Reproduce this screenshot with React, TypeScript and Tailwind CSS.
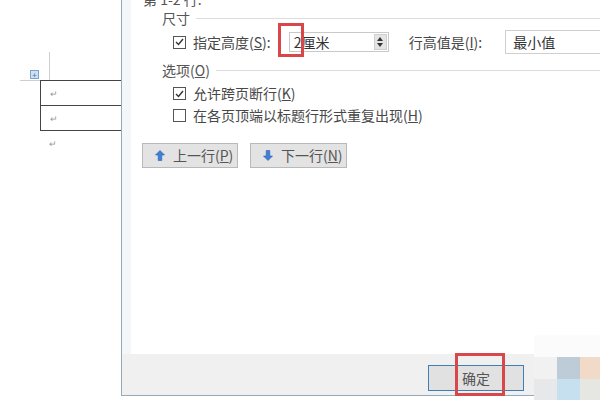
import React from 'react';

const FONT = { fontFamily: '"Noto Sans CJK SC", "Noto Sans", sans-serif' };

const Checkbox: React.FC<{ checked?: boolean }> = ({ checked }) => (
  <div className="w-[13px] h-[13px] border border-[#555] bg-white flex items-center justify-center shrink-0">
    {checked && (
      <svg width="9" height="8" viewBox="0 0 9 8">
        <path d="M1 4 L3.5 6.5 L8 1" fill="none" stroke="#333" strokeWidth="1.4" />
      </svg>
    )}
  </div>
);

const GroupTitle: React.FC<{ children: React.ReactNode; className: string }> = ({ children, className }) => (
  <div className={`flex items-center pl-[31px] ${className}`}>
    <span className="text-[14px] text-[#555] whitespace-nowrap">{children}</span>
    <div className="flex-1 h-px bg-[#dcdcdc] ml-[6px]" />
  </div>
);

const Arrow: React.FC<{ down?: boolean }> = ({ down }) => (
  <svg width="10" height="11" viewBox="0 0 10 11" className={down ? 'rotate-180' : ''}>
    <path d="M5 0.5 L9.5 5 L6.8 5 L6.8 10.5 L3.2 10.5 L3.2 5 L0.5 5 Z" fill="#3f7fd6" stroke="#2a63b5" strokeWidth="0.6" />
  </svg>
);

// left part: the Word document with the small table
const DocArea: React.FC = () => (
  <div className="w-[121px] shrink-0 bg-white pt-[52px] overflow-hidden">
    <div className="flex items-end h-[28px]">
      <div className="ml-[30px] mb-[1px] w-[9px] h-[9px] bg-[#cfe0f3] border border-[#7ea3cc] flex items-center justify-center">
        <span className="text-[8px] leading-none text-[#3a6fb0]">+</span>
      </div>
      <div className="ml-[10px] w-px h-full bg-[#cfcfcf]" />
    </div>
    <div className="flex">
      <div className="w-[20px] ml-[20px] h-px bg-[#cfcfcf]" />
    </div>
    <div className="ml-[40px] -mt-px border-t border-l border-[#444] w-[100px]">
      {[0, 1].map((i) => (
        <div key={i} className="h-[25px] border-b border-[#444] flex items-center pl-[9px]">
          <span className="text-[9px] text-[#999] leading-none">↵</span>
        </div>
      ))}
    </div>
    <div className="h-[25px] flex items-center pl-[49px]">
      <span className="text-[9px] text-[#999] leading-none">↵</span>
    </div>
  </div>
);

export default function App() {
  return (
    <div className="relative w-[600px] h-[400px] bg-white overflow-hidden flex" style={FONT}>
      <DocArea />

      <div className="flex-1 flex flex-col">
        <div className="h-[396px] flex flex-col border-l border-b border-[#95a8bc] bg-[#f0f0f0]">
          <div className="flex-1 flex bg-[#f4f7fa]">
            <div className="w-[9px] shrink-0" />
            <div className="flex-1 bg-white text-[#484848] text-[14px] flex flex-col overflow-hidden">
              <div className="-mt-[11px] h-[20px] leading-[20px] pl-[12px] text-[#555]">第 1-2 行:</div>

              <GroupTitle className="h-[18px]">尺寸</GroupTitle>

              <div className="h-[30px] flex items-center pl-[42px]">
                <Checkbox checked />
                <span className="ml-[7px] whitespace-nowrap">
                  指定高度(<span className="underline">S</span>):
                </span>
                <div className="relative ml-[18px] w-[100px] h-[20px] border border-[#c9c9c9] bg-white flex items-center">
                  <span className="pl-[4px] text-[14px] leading-none text-[#333]">2厘米</span>
                  <div className="ml-auto mr-px w-[13px] h-[16px] bg-[#e4e4e4] border border-[#cfcfcf] flex flex-col items-center justify-center gap-[2px]">
                    <div className="w-0 h-0 border-l-[3px] border-r-[3px] border-b-[4px] border-l-transparent border-r-transparent border-b-[#333]" />
                    <div className="w-0 h-0 border-l-[3px] border-r-[3px] border-t-[4px] border-l-transparent border-r-transparent border-t-[#333]" />
                  </div>
                  <div className="absolute -left-[12px] -top-[10px] w-[26px] h-[34px] border-[3px] border-[#d8474a]" />
                </div>
                <span className="ml-[20px] whitespace-nowrap">
                  行高值是(<span className="underline">I</span>):
                </span>
                <div className="ml-[23px] w-[120px] h-[24px] border border-[#cfcfcf] bg-white flex items-center pl-[7px] shrink-0">
                  <span className="text-[#333]">最小值</span>
                </div>
              </div>

              <GroupTitle className="h-[26px]">
                选项(<span className="underline">O</span>)
              </GroupTitle>

              <div className="h-[21px] flex items-center pl-[42px]">
                <Checkbox checked />
                <span className="ml-[7px] whitespace-nowrap">
                  允许跨页断行(<span className="underline">K</span>)
                </span>
              </div>
              <div className="h-[22px] flex items-center pl-[42px]">
                <Checkbox />
                <span className="ml-[7px] whitespace-nowrap">
                  在各页顶端以标题行形式重复出现(<span className="underline">H</span>)
                </span>
              </div>

              <div className="mt-[17px] flex gap-[12px] pl-[11px]">
                <button className="w-[96px] h-[25px] bg-[#e3e3e3] border border-[#b9b9b9] flex items-center pl-[12px] gap-[8px] text-[#555]">
                  <Arrow />
                  <span>
                    上一行(<span className="underline">P</span>)
                  </span>
                </button>
                <button className="w-[97px] h-[25px] bg-[#e3e3e3] border border-[#b9b9b9] flex items-center pl-[12px] gap-[8px] text-[#555]">
                  <Arrow down />
                  <span>
                    下一行(<span className="underline">N</span>)
                  </span>
                </button>
              </div>
            </div>
          </div>

          <div className="h-[41px] shrink-0 bg-[#f0f0f0] pt-[11px] pl-[306px]">
            <button className="relative w-[96px] h-[26px] bg-[#e1e1e1] border border-[#3f7fb6] text-[14px] text-[#555] flex items-center justify-center">
              确定
              <div className="absolute left-[26px] -top-[13px] w-[50px] h-[43px] border-[3px] border-[#d8474a]" />
            </button>
          </div>
        </div>
      </div>

      {/* watermark tiles in the corner */}
      <div className="absolute right-0 bottom-0 grid grid-cols-[23px_23px_20px] grid-rows-[22px_22px_21px]">
        <div className="bg-[#fbfbfb]" />
        <div className="bg-[#fbfbfb]" />
        <div className="bg-[#fbfbfb]" />
        <div className="bg-[#f1f1f1]" />
        <div className="bg-[#bdccd6]" />
        <div className="bg-[#f2dac8]" />
        <div className="bg-[#e6e8ea]" />
        <div className="bg-[#c6e0ef]" />
        <div className="bg-[#e6e7e3]" />
      </div>
    </div>
  );
}
